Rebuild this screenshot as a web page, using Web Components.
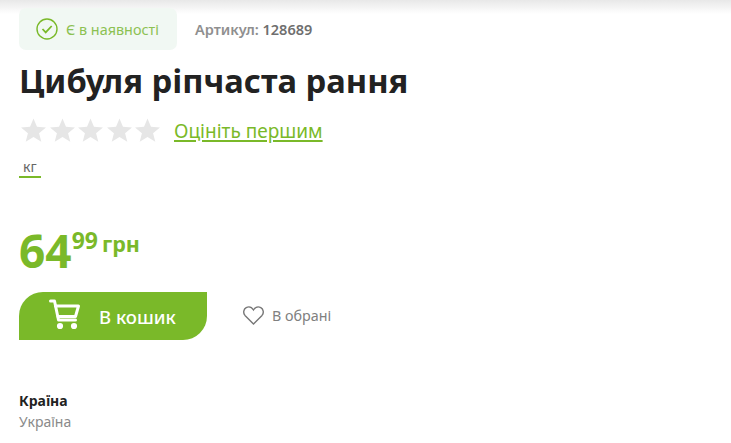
<!DOCTYPE html>
<html lang="uk">
<head>
<meta charset="utf-8">
<title>Цибуля ріпчаста рання</title>
<style>
  html, body { margin: 0; padding: 0; background: #fff; }
  body { width: 731px; height: 443px; overflow: hidden; font-family: "Noto Sans", sans-serif; }
</style>
</head>
<body>
<product-card>
  <stock-status slot="status">Є в наявності</stock-status>
  <span slot="sku">128689</span>
  <span slot="title">Цибуля ріпчаста рання</span>
  <star-rating slot="rating">Оцініть першим</star-rating>
  <span slot="unit">кг</span>
  <product-price slot="price" whole="64" cents="99" currency="грн"></product-price>
  <cart-button slot="cart">В кошик</cart-button>
  <wish-button slot="wish">В обрані</wish-button>
  <product-attr slot="attrs" name="Країна">Україна</product-attr>
</product-card>

<script>
class ProductCard extends HTMLElement {
  constructor() {
    super();
    const shadow = this.attachShadow({ mode: "open" });
    shadow.innerHTML = `
      <style>
        :host {
          display: block;
          height: 443px;
          padding: 8px 19px 0;
          box-sizing: border-box;
          background: linear-gradient(#e8e8e8 0, #fff 14px) no-repeat;
          color: #222;
        }
        .top { display: flex; align-items: center; gap: 18px; height: 42px; }
        .sku { font-size: 14.5px; font-weight: 600; color: #8f8f8f; }
        .sku b { font-weight: 600; color: #6f6f6f; }
        h1 { margin: 8px 0 0; font-size: 32.7px; line-height: 45px; font-weight: 700; color: #222; }
        .rating { margin-top: 10px; }
        .unit {
          display: inline-block;
          margin-top: 11px;
          padding: 0 4px;
          font-size: 14px;
          line-height: 18px;
          color: #666;
          border-bottom: 2px solid #7ab929;
        }
        .price { margin-top: 48px; }
        .actions { display: flex; align-items: center; gap: 36px; margin-top: 18px; }
        .attrs { margin-top: 50px; }
      </style>
      <div class="top">
        <slot name="status"></slot>
        <div class="sku">Артикул: <b><slot name="sku"></slot></b></div>
      </div>
      <h1><slot name="title"></slot></h1>
      <div class="rating"><slot name="rating"></slot></div>
      <div><span class="unit"><slot name="unit"></slot></span></div>
      <div class="price"><slot name="price"></slot></div>
      <div class="actions">
        <slot name="cart"></slot>
        <slot name="wish"></slot>
      </div>
      <div class="attrs"><slot name="attrs"></slot></div>
    `;
  }
}

class StockStatus extends HTMLElement {
  constructor() {
    super();
    const shadow = this.attachShadow({ mode: "open" });
    shadow.innerHTML = `
      <style>
        :host {
          display: inline-flex;
          align-items: center;
          gap: 8px;
          width: 158px;
          height: 42px;
          padding-left: 17px;
          box-sizing: border-box;
          background: #f1f8f3;
          border-radius: 7px;
          font-size: 14.4px;
          color: #8cc152;
        }
        svg { flex: none; }
      </style>
      <svg width="22" height="22" viewBox="0 0 22 22" fill="none" stroke="#7ab929" stroke-width="1.4">
        <circle cx="11" cy="11" r="10"/>
        <path d="M6.5 11l3.2 3.4 6-6.4" stroke-width="1.8"/>
      </svg>
      <span><slot></slot></span>
    `;
  }
}

class StarRating extends HTMLElement {
  constructor() {
    super();
    const shadow = this.attachShadow({ mode: "open" });
    const star = `<svg width="25" height="24" viewBox="0 0 26 24"><path fill="#e6e6e6" d="M13 0l3.6 8.6 9.4.7-7.2 6 2.3 9L13 19.3 4.9 24.3l2.3-9-7.2-6 9.4-.7z"/></svg>`;
    shadow.innerHTML = `
      <style>
        :host { display: flex; align-items: center; height: 34px; }
        .stars { display: flex; gap: 3.5px; margin-left: 2px; }
        a {
          margin: 2px 0 0 14px;
          font-size: 19px;
          color: #7ab929;
          text-decoration: underline;
          text-decoration-thickness: 2px;
          text-underline-offset: 2px;
        }
      </style>
      <div class="stars">${star.repeat(5)}</div>
      <a><slot></slot></a>
    `;
  }
}

class ProductPrice extends HTMLElement {
  constructor() {
    super();
    const shadow = this.attachShadow({ mode: "open" });
    shadow.innerHTML = `
      <style>
        :host { display: flex; align-items: flex-start; height: 48px; color: #7ab929; font-weight: 700; }
        .whole { font-size: 46px; line-height: 48px; }
        .cents { font-size: 23px; line-height: 28px; }
        .cur { font-size: 21.5px; line-height: 36px; margin-left: 4px; }
      </style>
      <span class="whole">${this.getAttribute("whole")}</span>
      <span class="cents">${this.getAttribute("cents")}</span>
      <span class="cur">${this.getAttribute("currency")}</span>
    `;
  }
}

class CartButton extends HTMLElement {
  constructor() {
    super();
    const shadow = this.attachShadow({ mode: "open" });
    shadow.innerHTML = `
      <style>
        :host {
          display: flex;
          align-items: center;
          width: 188px;
          height: 48px;
          padding-left: 30px;
          box-sizing: border-box;
          background: #7ab929;
          border-radius: 24px 0 24px 0;
          color: #fff;
          font-size: 18.5px;
          font-weight: 500;
        }
        svg { flex: none; margin-right: 18px; margin-top: -2px; }
      </style>
      <svg width="32" height="32" viewBox="0 0 32 32" fill="none" stroke="#fff" stroke-width="3" stroke-linecap="round" stroke-linejoin="round">
        <path d="M1.5 2h4l4 19h17"/>
        <path d="M6.5 7h23l-3 10.5H9"/>
        <circle cx="11" cy="27" r="1.6" fill="#fff"/>
        <circle cx="25" cy="27" r="1.6" fill="#fff"/>
      </svg>
      <span><slot></slot></span>
    `;
  }
}

class WishButton extends HTMLElement {
  constructor() {
    super();
    const shadow = this.attachShadow({ mode: "open" });
    shadow.innerHTML = `
      <style>
        :host { display: flex; align-items: center; gap: 8px; margin-top: -1px; font-size: 14.3px; color: #808080; }
        svg { flex: none; }
      </style>
      <svg width="21" height="19" viewBox="0 0 21 19" fill="none" stroke="#777" stroke-width="1.4">
        <path d="M10.5 18L2 9.4C-.2 7 .6 3 3.2 1.6 5.8.3 8.8 1.3 10.5 4c1.7-2.7 4.7-3.7 7.3-2.4C20.4 3 21.2 7 19 9.4z"/>
      </svg>
      <span><slot></slot></span>
    `;
  }
}

class ProductAttr extends HTMLElement {
  constructor() {
    super();
    const shadow = this.attachShadow({ mode: "open" });
    shadow.innerHTML = `
      <style>
        :host { display: block; font-size: 14px; line-height: 21px; color: #8a8a8a; }
        .name { font-weight: 700; color: #222; }
      </style>
      <div class="name">${this.getAttribute("name")}</div>
      <div><slot></slot></div>
    `;
  }
}

customElements.define("product-card", ProductCard);
customElements.define("stock-status", StockStatus);
customElements.define("star-rating", StarRating);
customElements.define("product-price", ProductPrice);
customElements.define("cart-button", CartButton);
customElements.define("wish-button", WishButton);
customElements.define("product-attr", ProductAttr);
</script>
</body>
</html>
